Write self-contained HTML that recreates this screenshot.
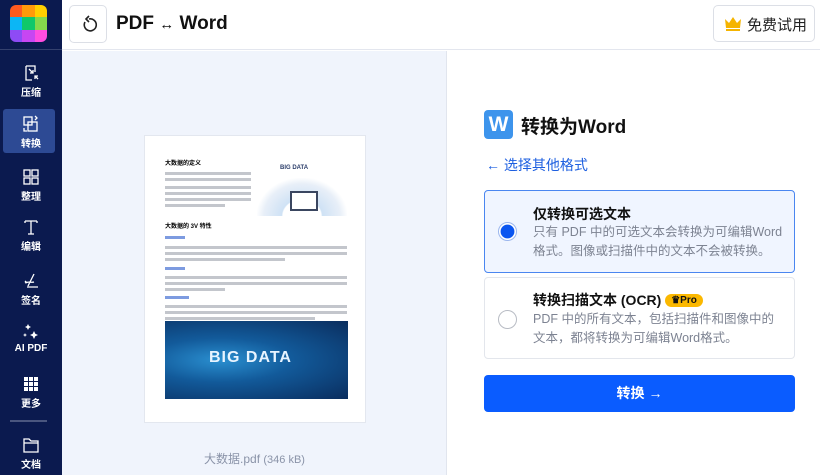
<!DOCTYPE html>
<html><head><meta charset="utf-8"><style>
*{box-sizing:border-box;margin:0;padding:0}
body{width:820px;height:475px;overflow:hidden;font-family:"Liberation Sans","Noto Sans CJK SC",sans-serif;background:#fff;position:relative}
.sb{position:absolute;left:0;top:0;width:62px;height:475px;background:#0b1a4f}
.logo{position:absolute;left:10px;top:5px;width:37px;height:37px;border-radius:6px;overflow:hidden;display:grid;grid-template-columns:repeat(3,1fr);grid-template-rows:repeat(3,1fr)}
.sep{position:absolute;left:0;width:62px;height:1px;background:#34416e}
.it{position:absolute;left:0;width:62px;text-align:center;color:#fff;font-size:10px;font-weight:bold}
.it svg{display:block;margin:0 auto 2px}
.act{position:absolute;left:3px;top:109px;width:52px;height:44px;background:#2d4a94;border-radius:3px}
.top{position:absolute;left:62px;top:0;width:758px;height:50px;background:#fff;border-bottom:1px solid #e3e6ee}
.back{position:absolute;left:7px;top:5px;width:38px;height:38px;border:1px solid #dcdfe6;border-radius:5px}
.ttl{position:absolute;left:54px;top:13px;font-size:19px;font-weight:bold;color:#111}
.free{position:absolute;left:651px;top:5px;width:102px;height:37px;border:1px solid #dcdfe6;border-radius:5px;font-size:15px;color:#222;padding:8px 0 0 33px}
.left{position:absolute;left:62px;top:51px;width:385px;height:424px;background:#f0f4fc;border-right:1px solid #e1e5ee}
.page{position:absolute;left:82px;top:84px;width:222px;height:288px;background:#fff;border:1px solid #e3e7ef}
.fn{position:absolute;left:0;width:385px;top:399px;text-align:center;font-size:12px;color:#8a93a8}
.fn small{font-size:11px}
.l{position:absolute;height:3px;background:#c3c6cc}
.card{position:absolute;left:484px;width:311px;border:1px solid #e3e6ec;border-radius:4px;background:#fff}
.card h4{position:absolute;left:48px;font-size:14px;color:#111}
.card p{position:absolute;left:48px;top:32px;width:252px;font-size:12.5px;line-height:19px;color:#7d8392}
.rad{position:absolute;left:13px;width:19px;height:19px;border-radius:50%;border:1.5px solid #b8bcc4}
</style></head><body>
<div class="sb">
<div class="logo"><i style="background:#ff5a1f"></i><i style="background:#ff9a0a"></i><i style="background:#ffcf00"></i><i style="background:#0cb6f5"></i><i style="background:#0fc86a"></i><i style="background:#84d94c"></i><i style="background:#8e4bf5"></i><i style="background:#c746f2"></i><i style="background:#ff4de0"></i></div>
<div class="sep" style="top:49px"></div>
<div class="act"></div>
<div class="it" style="top:64px"><svg width="18" height="18" viewBox="0 0 18 18" fill="none" stroke="#fff" stroke-width="1.3"><path d="M4 2h9v6M4 2v14h6M7 5l4 4M11 6v3H8M16 15l-3-3M13 15v-3h3"/></svg>压缩</div>
<div class="it" style="top:115px"><svg width="18" height="18" viewBox="0 0 18 18" fill="none" stroke="#fff" stroke-width="1.3"><rect x="2" y="2" width="8" height="8"/><rect x="6" y="7" width="9" height="9"/><path d="M13 1l2 2-2 2M2 13l0 3h3"/></svg>转换</div>
<div class="it" style="top:168px"><svg width="18" height="18" viewBox="0 0 18 18" fill="none" stroke="#fff" stroke-width="1.3"><rect x="2" y="2" width="6" height="6"/><rect x="10" y="2" width="6" height="6"/><rect x="2" y="10" width="6" height="6"/><rect x="10" y="10" width="6" height="6"/></svg>整理</div>
<div class="it" style="top:218px"><svg width="18" height="18" viewBox="0 0 18 18" fill="none" stroke="#fff" stroke-width="1.3"><path d="M3 3h12M9 3v13M6 16h6M3 3v2M15 3v2"/></svg>编辑</div>
<div class="it" style="top:272px"><svg width="18" height="18" viewBox="0 0 18 18" fill="none" stroke="#fff" stroke-width="1.3"><path d="M12 2L6 14M3 11c3-2 6 0 9-1M5 15h11M3 9l2 2"/></svg>签名</div>
<div class="it" style="top:323px"><svg width="18" height="18" viewBox="0 0 18 18" fill="#fff"><path d="M6 1l1 2 2 1-2 1-1 2-1-2-2-1 2-1zM12 8l1.3 2.7L16 12l-2.7 1.3L12 16l-1.3-2.7L8 12l2.7-1.3zM3 10l.6 1.4L5 12l-1.4.6L3 14l-.6-1.4L1 12l1.4-.6z"/></svg>AI PDF</div>
<div class="it" style="top:375px"><svg width="18" height="18" viewBox="0 0 18 18" fill="#fff"><rect x="2" y="2" width="4" height="4"/><rect x="7" y="2" width="4" height="4"/><rect x="12" y="2" width="4" height="4"/><rect x="2" y="7" width="4" height="4"/><rect x="7" y="7" width="4" height="4"/><rect x="12" y="7" width="4" height="4"/><rect x="2" y="12" width="4" height="4"/><rect x="7" y="12" width="4" height="4"/><rect x="12" y="12" width="4" height="4"/></svg>更多</div>
<div class="sep" style="top:420px;left:10px;width:37px;background:#4a567f;height:2px"></div>
<div class="it" style="top:436px"><svg width="18" height="18" viewBox="0 0 18 18" fill="none" stroke="#fff" stroke-width="1.3"><path d="M2 3h5l2 2h7v11H2zM2 7h14"/></svg>文档</div>
</div>
<div class="top">
<div class="back"><svg width="38" height="38" viewBox="0 0 38 38" fill="none" stroke="#222" stroke-width="1.6"><path d="M15 16a6 6 0 1 0 4-3"/><path d="M19 10l-3 3 3 3" fill="none"/></svg></div>
<div class="ttl">PDF <span style="font-weight:normal;font-size:15px">↔</span> Word</div>
<div class="free"><svg style="position:absolute;left:10px;top:10px" width="18" height="16" viewBox="0 0 18 16" fill="#f5b400"><path d="M1 3l4 4 4-6 4 6 4-4-1 9H2z"/><rect x="2" y="13" width="14" height="2"/></svg>免费试用</div>
</div>
<div class="left">
<div class="page">
<div style="position:absolute;left:20px;top:22px;font-size:6px;font-weight:bold">大数据的定义</div>
<div class="l" style="left:20px;top:36px;width:86px"></div><div class="l" style="left:20px;top:42px;width:86px"></div><div class="l" style="left:20px;top:50px;width:86px"></div><div class="l" style="left:20px;top:56px;width:86px"></div><div class="l" style="left:20px;top:62px;width:86px"></div><div class="l" style="left:20px;top:68px;width:60px"></div>
<div style="position:absolute;left:135px;top:29px;font-size:6px;color:#2c3e6a;font-weight:bold">BIG DATA</div>
<div style="position:absolute;left:112px;top:42px;width:90px;height:38px;background:radial-gradient(ellipse at 50% 100%,#fff 30%,#cfe2f5 32%,#e8eff8 60%,#fff 72%)"></div>
<div style="position:absolute;left:145px;top:55px;width:28px;height:20px;border:2px solid #3a4660;background:#fff"></div>
<div style="position:absolute;left:20px;top:85px;font-size:6px;font-weight:bold">大数据的 3V 特性</div>
<div class="l" style="left:20px;top:100px;width:20px;background:#7d9be0"></div>
<div class="l" style="left:20px;top:110px;width:182px"></div><div class="l" style="left:20px;top:116px;width:182px"></div><div class="l" style="left:20px;top:122px;width:120px"></div>
<div class="l" style="left:20px;top:131px;width:20px;background:#7d9be0"></div>
<div class="l" style="left:20px;top:140px;width:182px"></div><div class="l" style="left:20px;top:146px;width:182px"></div><div class="l" style="left:20px;top:152px;width:60px"></div>
<div class="l" style="left:20px;top:160px;width:24px;background:#7d9be0"></div>
<div class="l" style="left:20px;top:169px;width:182px"></div><div class="l" style="left:20px;top:175px;width:182px"></div><div class="l" style="left:20px;top:181px;width:150px"></div>
<div style="position:absolute;left:20px;top:185px;width:183px;height:78px;background:radial-gradient(ellipse at 30% 50%,#2a8fd0 0%,#125a9a 40%,#0a2d5e 100%)"><div style="position:absolute;left:44px;top:28px;color:#e8f4ff;font-weight:bold;font-size:16px;letter-spacing:1px">BIG DATA</div></div>
</div>
<div class="fn">大数据.pdf <small>(346 kB)</small></div>
</div>
<div style="position:absolute;left:484px;top:110px;width:29px;height:29px;border-radius:4px;background:#3d94ec;color:#fff;font-weight:bold;font-size:21px;text-align:center;line-height:29px">W</div>
<div style="position:absolute;left:521px;top:112px;font-size:19px;font-weight:bold;color:#111">转换为Word</div>
<div style="position:absolute;left:486px;top:155px;font-size:14px;color:#1d5fe0">← 选择其他格式</div>
<div class="card" style="top:190px;height:83px;background:#f0f5ff;border-color:#4a86f0">
<div class="rad" style="top:31px;border-color:#9bb6ee;background:radial-gradient(circle,#0a55f0 55%,#fff 60%)"></div>
<h4 style="top:13px">仅转换可选文本</h4>
<p>只有 PDF 中的可选文本会转换为可编辑Word格式。图像或扫描件中的文本不会被转换。</p></div>
<div class="card" style="top:277px;height:82px">
<div class="rad" style="top:32px"></div>
<h4 style="top:12px">转换扫描文本 (OCR) <span style="display:inline-block;background:#fbb800;border-radius:8px;font-size:10px;padding:1px 6px;vertical-align:2px">♛Pro</span></h4>
<p style="width:242px">PDF 中的所有文本，包括扫描件和图像中的文本，都将转换为可编辑Word格式。</p></div>
<div style="position:absolute;left:484px;top:375px;width:311px;height:37px;background:#0a5cff;border-radius:4px;color:#fff;font-size:14px;font-weight:bold;text-align:center;line-height:37px">转换 <span style="font-weight:normal">→</span></div>
</body></html>
